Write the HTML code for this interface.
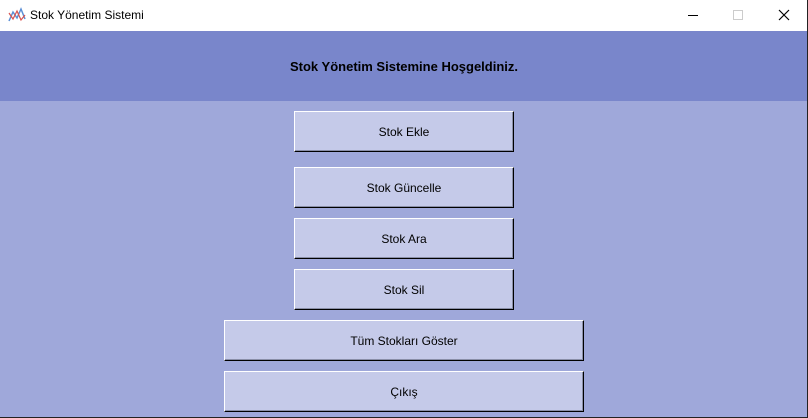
<!DOCTYPE html>
<html><head><meta charset="utf-8"><style>
*{margin:0;padding:0;box-sizing:border-box}
body{width:808px;height:418px;overflow:hidden;background:#9fa8da;font-family:"Liberation Sans",sans-serif;position:relative}
.title{position:absolute;left:0;top:0;width:808px;height:31px;background:#fff;font-size:12px;color:#000}
.title span{position:absolute;left:30px;top:8px}
.hdr{position:absolute;left:0;top:31px;width:808px;height:70px;background:#7986cb;text-align:center;font-weight:bold;font-size:13px;line-height:72px;color:#000}
.b{position:absolute;background:#c5cae9;border-top:1px solid #fff;border-left:1px solid #fff;border-right:1px solid #000;border-bottom:1px solid #000;box-shadow:inset -1px -1px 0 #8a8fa8;font-size:12px;text-align:center;color:#000}
.edge{position:absolute;background:#222}
</style></head><body>
<div class="title">
<svg style="position:absolute;left:8px;top:7px" width="18" height="16" viewBox="0 0 18 16"><polyline points="1,14 5,5 9,11 13,2 17,12" fill="none" stroke="#5b8fd6" stroke-width="1.5"/><polyline points="1,6 5,12 9,4 13,13 17,8" fill="none" stroke="#d9534f" stroke-width="1.2"/></svg>
<span>Stok Yönetim Sistemi</span>
<div style="position:absolute;left:688px;top:15px;width:10px;height:1px;background:#000"></div>
<div style="position:absolute;left:733px;top:10px;width:10px;height:10px;border:1px solid #ccc"></div>
<svg style="position:absolute;left:778px;top:9px" width="12" height="12"><path d="M1 1L11 11M11 1L1 11" stroke="#000" stroke-width="1.2"/></svg>
</div>
<div class="hdr">Stok Yönetim Sistemine Hoşgeldiniz.</div>
<div class="b" style="left:294px;top:111px;width:220px;height:41px;line-height:41px">Stok Ekle</div>
<div class="b" style="left:294px;top:167px;width:220px;height:41px;line-height:41px">Stok Güncelle</div>
<div class="b" style="left:294px;top:218px;width:220px;height:41px;line-height:41px">Stok Ara</div>
<div class="b" style="left:294px;top:269px;width:220px;height:41px;line-height:41px">Stok Sil</div>
<div class="b" style="left:224px;top:320px;width:360px;height:41px;line-height:41px">Tüm Stokları Göster</div>
<div class="b" style="left:224px;top:371px;width:360px;height:41px;line-height:41px">Çıkış</div>
<div class="edge" style="right:0;top:0;width:1px;height:418px"></div>
<div class="edge" style="left:0;bottom:0;width:808px;height:1px"></div>
</body></html>
